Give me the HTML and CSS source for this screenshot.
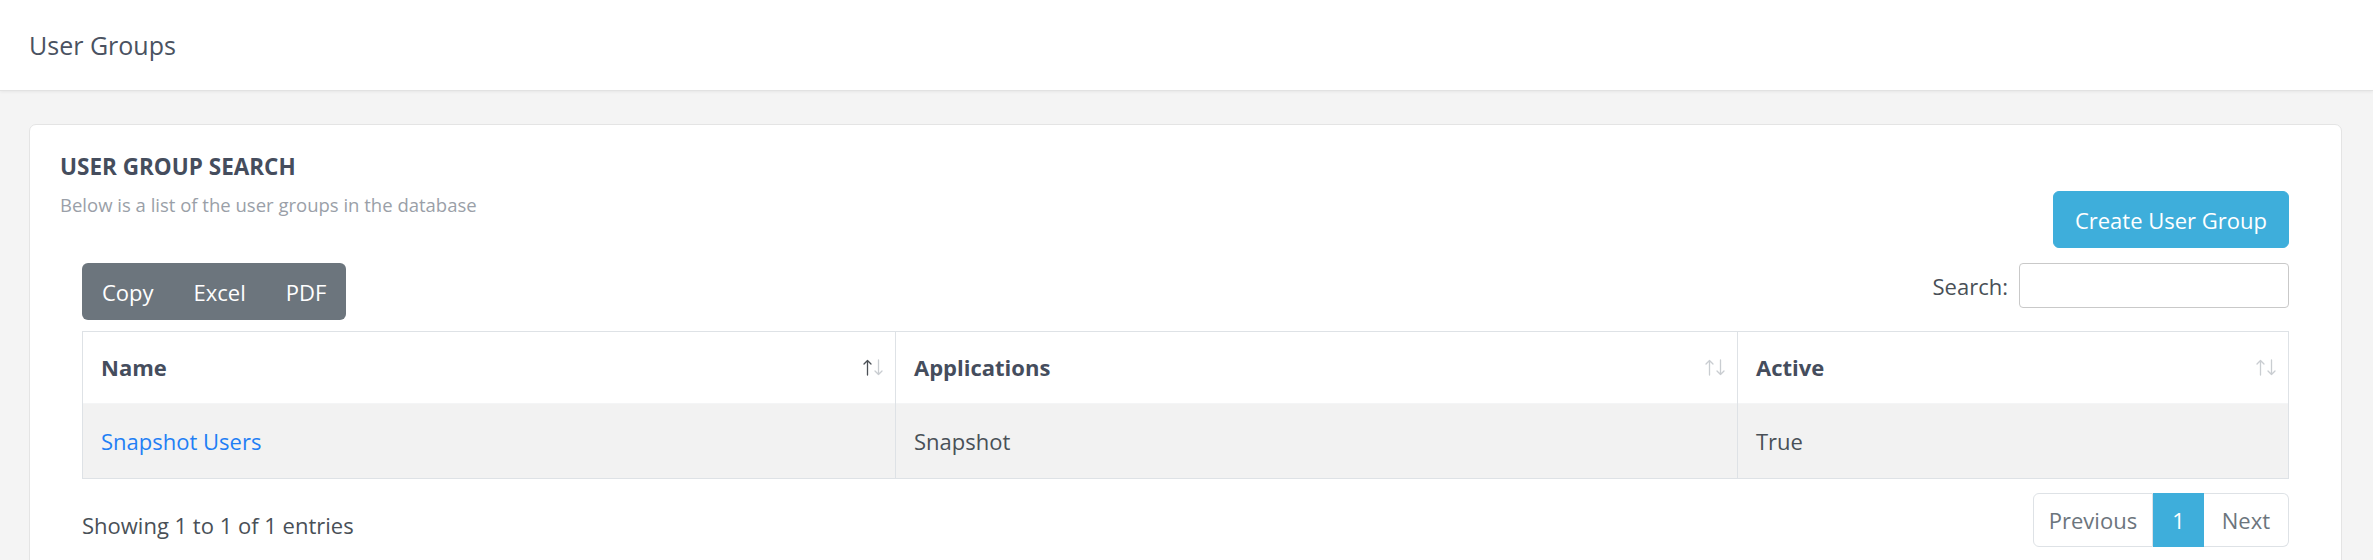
FILE: index.html
```html
<!DOCTYPE html>
<html lang="en">
<head>
<meta charset="utf-8">
<title>User Groups</title>
<link rel="stylesheet" href="styles.css">
</head>
<body>
<header class="topbar">
  <h1 class="page-title">User Groups</h1>
</header>
<main class="content">
  <section class="card">
    <div class="card-head">
      <div class="card-titles">
        <h2 class="card-title">USER GROUP SEARCH</h2>
        <p class="card-sub">Below is a list of the user groups in the database</p>
      </div>
      <button class="btn-create" type="button">Create User Group</button>
    </div>
    <div class="card-inner">
      <div class="dt-top">
        <div class="btn-group">
          <button class="btn-export" type="button">Copy</button>
          <button class="btn-export" type="button">Excel</button>
          <button class="btn-export" type="button">PDF</button>
        </div>
        <label class="dt-search">Search:<input class="dt-input" type="search"></label>
      </div>
      <table class="dt-table">
        <colgroup>
          <col class="col-name">
          <col class="col-apps">
          <col class="col-active">
        </colgroup>
        <thead>
          <tr>
            <th><div class="th-in"><span>Name</span>
              <svg class="sort" width="20" height="17" viewBox="0 0 20 17"><g fill="none" stroke-width="1.3" stroke-linecap="round" stroke-linejoin="round"><path class="up on" d="M4.5 16V1.5M1 5l3.5-3.5L8 5"/><path class="down" d="M15.5 1v14.5M12 12l3.5 3.5L19 12"/></g></svg></div></th>
            <th><div class="th-in"><span>Applications</span>
              <svg class="sort" width="20" height="17" viewBox="0 0 20 17"><g fill="none" stroke-width="1.3" stroke-linecap="round" stroke-linejoin="round"><path class="up" d="M4.5 16V1.5M1 5l3.5-3.5L8 5"/><path class="down" d="M15.5 1v14.5M12 12l3.5 3.5L19 12"/></g></svg></div></th>
            <th><div class="th-in"><span>Active</span>
              <svg class="sort" width="20" height="17" viewBox="0 0 20 17"><g fill="none" stroke-width="1.3" stroke-linecap="round" stroke-linejoin="round"><path class="up" d="M4.5 16V1.5M1 5l3.5-3.5L8 5"/><path class="down" d="M15.5 1v14.5M12 12l3.5 3.5L19 12"/></g></svg></div></th>
          </tr>
        </thead>
        <tbody>
          <tr class="odd">
            <td><a class="link" href="#">Snapshot Users</a></td>
            <td>Snapshot</td>
            <td>True</td>
          </tr>
        </tbody>
      </table>
      <div class="dt-bottom">
        <div class="dt-info">Showing 1 to 1 of 1 entries</div>
        <nav class="pagination">
          <span class="page-link prev">Previous</span>
          <span class="page-link active">1</span>
          <span class="page-link next">Next</span>
        </nav>
      </div>
    </div>
  </section>
</main>
</body>
</html>
```
FILE: styles.css
```css
* { box-sizing: border-box; }
html, body { margin: 0; padding: 0; }
body {
  background: #f4f4f4;
  font-family: "Open Sans", "Noto Sans", sans-serif;
  font-size: 22px;
  line-height: 36px;
  color: #495057;
}
.topbar {
  height: 91px;
  background: #fff;
  border-bottom: 1px solid #e2e2e2;
  box-shadow: 0 1px 3px rgba(0,0,0,0.06);
  display: flex;
  align-items: center;
  padding-left: 29px;
}
.page-title {
  margin: 0;
  font-size: 25px;
  line-height: 34px;
  font-weight: 400;
  color: #4a5261;
}
.content {
  padding: 33px 31px 0 29px;
}
.card {
  background: #fff;
  border: 1px solid #e4e4e4;
  border-radius: 7px;
  padding: 27px 30px 40px 30px;
}
.card-head {
  display: flex;
  justify-content: space-between;
  align-items: flex-start;
}
.card-title {
  margin: 0;
  font-size: 22.5px;
  line-height: 30px;
  font-weight: 700;
  color: #454d5d;
}
.card-sub {
  margin: 9px 0 0;
  font-size: 18.5px;
  line-height: 28px;
  color: #9a9fa8;
}
.btn-create {
  margin: 39px 22px 0 0;
  height: 57px;
  padding: 0 21px;
  border: 1px solid #3eaedb;
  border-radius: 6px;
  background: #3eaedb;
  color: #fff;
  font-family: inherit;
  font-size: 22px;
  line-height: 36px;
}
.card-inner {
  padding: 0 22px;
}
.dt-top {
  margin-top: 15px;
  display: flex;
  justify-content: space-between;
  align-items: flex-start;
}
.btn-group {
  display: flex;
  background: #6c757d;
  border-radius: 6px;
  height: 57px;
}
.btn-export {
  border: 0;
  background: transparent;
  color: #fff;
  font-family: inherit;
  font-size: 22px;
  line-height: 36px;
  padding: 0 20px;
}
.dt-search {
  display: flex;
  align-items: center;
  gap: 11px;
  color: #495057;
}
.dt-input {
  width: 270px;
  height: 45px;
  border: 1px solid #c9c9c9;
  border-radius: 4px;
  background: #fff;
}
.dt-table {
  margin-top: 11px;
  width: 100%;
  table-layout: fixed;
  border-collapse: collapse;
  border: 1px solid #dee2e6;
}
.col-name { width: 813px; }
.col-apps { width: 842px; }
.dt-table th {
  text-align: left;
  font-weight: 700;
  color: #454d5d;
  padding: 17px 12px 18px 18px;
  border-left: 1px solid #dee2e6;
  border-right: 1px solid #dee2e6;
  background: #fff;
}
.th-in {
  display: flex;
  justify-content: space-between;
  align-items: center;
}
.sort { display: block; }
.sort path { stroke: #c9cdd1; }
.sort path.on { stroke: #4a4f55; }
.dt-table td {
  padding: 19px 18px;
  border: 1px solid #dee2e6;
  border-top-color: #f4f5f6;
  color: #495057;
}
.dt-table tr.odd td { background: #f2f2f2; }
.link { color: #1f7ff5; text-decoration: none; }
.dt-bottom {
  margin-top: 14px;
  display: flex;
  justify-content: space-between;
  align-items: flex-start;
}
.dt-info {
  padding-top: 14px;
  color: #495057;
}
.pagination {
  display: flex;
}
.page-link {
  display: block;
  padding: 11px 18px;
  line-height: 30px;
  border: 1px solid #dee2e6;
  color: #6c757d;
  background: #fff;
}
.page-link.prev {
  padding: 11px 15px;
  border-radius: 6px 0 0 6px;
}
.page-link.next {
  border-radius: 0 6px 6px 0;
  border-left: 0;
}
.page-link.active {
  background: #3eaedb;
  border-color: #3eaedb;
  color: #fff;
}
```
